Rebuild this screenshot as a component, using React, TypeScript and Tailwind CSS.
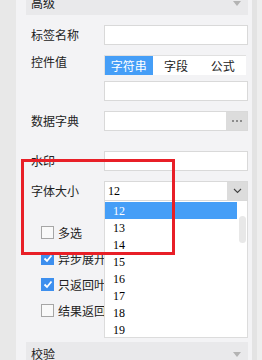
import React from 'react';

// 字号下拉选项
const fontSizes = ['12', '13', '14', '15', '16', '17', '18', '19'];

// 复选项 (被下拉列表遮住的部分裁掉)
const options = [
  { label: '多选', checked: false },
  { label: '异步展开', checked: true },
  { label: '只返回叶子节点', checked: true },
  { label: '结果返回完整层级', checked: false },
];

const Caret = () => (
  <svg width="8" height="5" viewBox="0 0 8 5" className="mr-[7px]">
    <polygon points="0,0 8,0 4,5" fill="#b3b3b3" />
  </svg>
);

const SectionHeader = ({ title, className = '' }: { title: string; className?: string }) => (
  <div className={`h-[24px] bg-[#e9e9eb] flex items-center justify-between pl-[5px] ${className}`}>
    <span className="text-[12px] text-[#222]">{title}</span>
    <Caret />
  </div>
);

const TextInput = () => <div className="h-[20px] w-[144px] bg-white border border-[#d9d9d9]" />;

const Row = ({ label, children, className = '' }: { label: string; children: React.ReactNode; className?: string }) => (
  <div className={`flex items-center ${className}`}>
    <div className="w-[78px] pl-[5px] text-[12px] text-[#222]">{label}</div>
    {children}
  </div>
);

const CheckBox = ({ checked }: { checked: boolean }) =>
  checked ? (
    <div className="w-[13px] h-[13px] shrink-0 bg-[#3d8fee] flex items-center justify-center">
      <svg width="10" height="9" viewBox="0 0 10 9">
        <path d="M1.5 4.5 L4 7 L8.5 1.5" stroke="white" strokeWidth="1.8" fill="none" />
      </svg>
    </div>
  ) : (
    <div className="w-[13px] h-[13px] shrink-0 bg-[#f9f9f9] border border-[#a6a6a6]" />
  );

export default function App() {
  return (
    <div className="relative w-[262px] h-[360px] overflow-hidden bg-[#e8e8e8] flex font-['Noto_Sans_CJK_SC',sans-serif]">
      <div className="w-[16px]" />
      <div className="w-[236px] h-full bg-[#f3f3f5] pl-[10px] pr-[4px] overflow-hidden">
        <SectionHeader title="高级" className="-mt-[9px]" />

        <Row label="标签名称" className="mt-[10px]">
          <TextInput />
        </Row>

        <div className="flex mt-[10px]">
          <div className="w-[78px] pl-[5px] text-[12px] text-[#222] leading-[12px] mt-[1px]">控件值</div>
          <div className="flex flex-col">
            <div className="flex h-[20px] w-[142px] border-t border-l border-[#e0e0e0] bg-white text-[12px]">
              <div className="w-[48px] bg-[#459ef7] text-white flex items-center justify-center">字符串</div>
              <div className="w-[47px] text-[#222] flex items-center justify-center">字段</div>
              <div className="w-[47px] text-[#222] flex items-center justify-center">公式</div>
            </div>
            <div className="mt-[6px]">
              <TextInput />
            </div>
          </div>
        </div>

        <Row label="数据字典" className="mt-[10px]">
          <div className="h-[20px] w-[144px] bg-white border border-[#d9d9d9] flex justify-end">
            <div className="w-[21px] h-full bg-[#dcdcdc] flex items-center justify-center gap-[2px]">
              <span className="w-[2px] h-[2px] bg-[#8c8c8c]" />
              <span className="w-[2px] h-[2px] bg-[#8c8c8c]" />
              <span className="w-[2px] h-[2px] bg-[#8c8c8c]" />
            </div>
          </div>
        </Row>

        <Row label="水印" className="mt-[20px]">
          <TextInput />
        </Row>

        <Row label="字体大小" className="mt-[10px]">
          <div className="h-[20px] w-[144px] bg-white border border-[#d9d9d9] flex items-center justify-between">
            <span className="pl-[3px] text-[12px] text-black font-['Liberation_Serif',serif]">12</span>
            <div className="w-[20px] h-full bg-[#dcdcdc] flex items-center justify-center">
              <svg width="9" height="6" viewBox="0 0 9 6">
                <path d="M1 1 L4.5 4.5 L8 1" stroke="#444" strokeWidth="1.1" fill="none" />
              </svg>
            </div>
          </div>
        </Row>

        <div className="mt-[25px] pl-[15px] flex flex-col gap-[13px]">
          {options.map((opt) => (
            <div key={opt.label} className="flex items-center h-[13px] gap-[4px]">
              <CheckBox checked={opt.checked} />
              <span className="w-[46px] overflow-hidden text-[12px] text-[#222] whitespace-nowrap">{opt.label}</span>
            </div>
          ))}
        </div>

        <SectionHeader title="校验" className="mt-[25px]" />
      </div>
      <div className="w-[5px] h-full bg-[#e3e3e3]" />
      <div className="w-[5px] h-full bg-[#eeeeee]" />

      {/* 下拉列表 */}
      <div className="absolute left-[104px] top-[201px] w-[144px] h-[137px] bg-white border border-[#dcdcdc] border-t-0 flex">
        <div className="flex-1 flex flex-col pt-[1px]">
          {fontSizes.map((size, i) => (
            <div
              key={size}
              className={`h-[17px] flex items-center pl-[8px] text-[12px] font-['Liberation_Serif',serif] ${
                i === 0 ? 'bg-[#459ef7] text-white' : 'text-black'
              }`}
            >
              {size}
            </div>
          ))}
        </div>
        <div className="w-[10px] pt-[15px] flex justify-center">
          <div className="w-[7px] h-[27px] rounded-full bg-[#e8e8e8]" />
        </div>
      </div>

      {/* 红色标注框 */}
      <div className="absolute left-[21px] top-[159px] w-[154px] h-[96px] border-[3px] border-[#e81f27]" />
    </div>
  );
}
